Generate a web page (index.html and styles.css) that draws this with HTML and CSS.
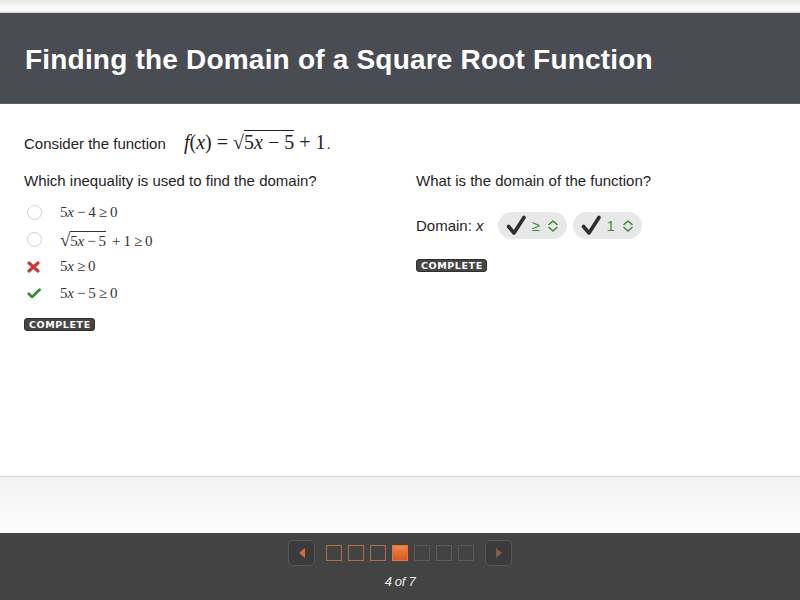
FILE: index.html
```html
<!DOCTYPE html>
<html>
<head>
<meta charset="utf-8">
<link rel="stylesheet" href="styles.css">
</head>
<body>
<div class="topstrip"></div>
<header class="header"><h1 class="title">Finding the Domain of a Square Root Function</h1></header>
<main class="content">
  <p class="intro">Consider the function <span class="math"><i>f</i>(<i>x</i>) = <span class="rad">√</span><span class="radicand">5<i>x</i> − 5</span> + 1</span>.</p>
  <div class="cols">
    <section class="col">
      <p class="q">Which inequality is used to find the domain?</p>
      <ul class="opts">
        <li class="opt"><span class="mark"><span class="radio"></span></span><span class="expr">5<i>x</i> − 4 ≥ 0</span></li>
        <li class="opt"><span class="mark"><span class="radio"></span></span><span class="expr"><span class="srad">√</span><span class="sradicand">5<i>x</i> − 5</span> + 1 ≥ 0</span></li>
        <li class="opt"><span class="mark"><svg width="13" height="12" viewBox="0 0 13 12"><path d="M2 2 L11 10 M11 2 L2 10" stroke="#c73a3c" stroke-width="3.2" stroke-linecap="round"/></svg></span><span class="expr">5<i>x</i> ≥ 0</span></li>
        <li class="opt"><span class="mark"><svg width="14" height="11" viewBox="0 0 14 11"><path d="M1.8 5.8 L5 9 L12.5 1.8" fill="none" stroke="#3c8c32" stroke-width="2.8" stroke-linecap="round" stroke-linejoin="round"/></svg></span><span class="expr">5<i>x</i> − 5 ≥ 0</span></li>
      </ul>
      <span class="badge badge-left">COMPLETE</span>
    </section>
    <section class="col">
      <p class="q">What is the domain of the function?</p>
      <div class="domain">
        <span class="dlabel">Domain: <i>x</i></span>
        <span class="pill">
          <svg class="chk" width="21" height="21" viewBox="0 0 21 21"><path d="M2.5 11.5 L8 18 L18 2.5" fill="none" stroke="#2e2e2e" stroke-width="3.6" stroke-linecap="round" stroke-linejoin="round"/></svg>
          <span class="val">≥</span>
          <svg class="chev" width="12" height="14" viewBox="0 0 12 14"><path d="M2 5.5 L6 2 L10 5.5 M2 8.5 L6 12 L10 8.5" fill="none" stroke="#3c8c32" stroke-width="1.6" stroke-linecap="round" stroke-linejoin="round"/></svg>
        </span>
        <span class="pill">
          <svg class="chk" width="21" height="21" viewBox="0 0 21 21"><path d="M2.5 11.5 L8 18 L18 2.5" fill="none" stroke="#2e2e2e" stroke-width="3.6" stroke-linecap="round" stroke-linejoin="round"/></svg>
          <span class="val">1</span>
          <svg class="chev" width="12" height="14" viewBox="0 0 12 14"><path d="M2 5.5 L6 2 L10 5.5 M2 8.5 L6 12 L10 8.5" fill="none" stroke="#3c8c32" stroke-width="1.6" stroke-linecap="round" stroke-linejoin="round"/></svg>
        </span>
      </div>
      <span class="badge badge-right">COMPLETE</span>
    </section>
  </div>
</main>
<div class="shelf"></div>
<footer class="footer">
  <nav class="nav">
    <span class="navbtn"><span class="tri tri-left"></span></span>
    <span class="steps">
      <span class="step done"></span><span class="step done"></span><span class="step done"></span><span class="step cur"></span><span class="step"></span><span class="step"></span><span class="step"></span>
    </span>
    <span class="navbtn"><span class="tri tri-right"></span></span>
  </nav>
  <div class="count">4 of 7</div>
</footer>
</body>
</html>
```
FILE: styles.css
```css
* { box-sizing: border-box; }
html, body { margin: 0; padding: 0; }
body {
  width: 800px;
  height: 600px;
  overflow: hidden;
  background: #fff;
  font-family: "Liberation Sans", Arial, sans-serif;
  color: #1e1e1e;
}
.topstrip {
  height: 13px;
  background: linear-gradient(#e8e8e8, #fbfbfb 60%, #f4f4f4);
  border-bottom: 1px solid #d4d4d4;
}
.header {
  height: 91px;
  background: #4a4c54;
  border-bottom: 1px solid #5c5e65;
  display: flex;
  align-items: center;
  padding: 4px 0 0 25px;
}
.title {
  margin: 0;
  font-size: 28px;
  line-height: 32px;
  font-weight: bold;
  color: #fff;
  letter-spacing: 0.2px;
}
.content {
  height: 373px;
  padding: 28px 24px 0 24px;
  border-bottom: 1px solid #d6d6d6;
}
.intro {
  margin: 0;
  font-size: 15px;
  line-height: 21px;
  height: 21px;
}
.math {
  font-family: "Liberation Serif", "Times New Roman", serif;
  font-size: 20px;
  margin-left: 14px;
  margin-right: 1px;
  color: #222;
}
.rad { font-size: 20px; }
.radicand { border-top: 1.3px solid #222; }
.cols {
  display: grid;
  grid-template-columns: 392px 1fr;
  margin-top: 18px;
}
.col { display: flex; flex-direction: column; align-items: flex-start; }
.q {
  margin: 0;
  font-size: 15px;
  line-height: 20px;
}
.opts {
  list-style: none;
  margin: 8px 0 0 0;
  padding: 0;
}
.opt {
  height: 27px;
  display: flex;
  align-items: center;
}
.mark {
  width: 36px;
  display: flex;
  justify-content: flex-start;
  padding-left: 3px;
}
.radio {
  width: 15px;
  height: 15px;
  border-radius: 50%;
  border: 1px solid #cfcfcf;
  background: #fff;
}
.expr {
  font-family: "Liberation Serif", "Times New Roman", serif;
  font-size: 15px;
  color: #333;
  letter-spacing: -0.2px;
  word-spacing: -0.4px;
}
.srad { font-size: 19px; margin-right: 0; }
.sradicand { border-top: 1px solid #333; padding-top: 1px; margin-right: 3px; }
.badge {
  display: inline-block;
  background: #464646;
  border: 1px solid #2f2f2f;
  border-radius: 3px;
  color: #fff;
  font-family: "DejaVu Sans", Verdana, sans-serif;
  font-weight: bold;
  font-size: 9.5px;
  line-height: 11px;
  letter-spacing: 0.6px;
  padding: 0 3px 0 4px;
}
.badge-left { margin-top: 11px; }
.badge-right { margin-top: 20px; }
.domain {
  margin-top: 21px;
  display: flex;
  align-items: center;
  gap: 6px;
}
.dlabel {
  font-size: 15px;
  line-height: 20px;
  margin-right: 8px;
}
.pill {
  height: 27px;
  width: 69px;
  border-radius: 14px;
  background: #e8e8e8;
  display: flex;
  align-items: center;
  padding-left: 8px;
}
.chk { margin-right: 5px; }
.val {
  font-size: 15px;
  color: #3c8c32;
  width: 12px;
}
.chev { margin-left: 3px; }
.shelf {
  height: 56px;
  background: linear-gradient(#f3f3f3, #fdfdfd);
}
.footer {
  height: 67px;
  background: #434343;
  padding-top: 7px;
  display: flex;
  flex-direction: column;
  align-items: center;
}
.nav {
  display: flex;
  align-items: center;
  height: 26px;
}
.navbtn {
  width: 27px;
  height: 26px;
  border: 1px solid #575757;
  border-radius: 5px;
  background: #3b3b3b;
  display: flex;
  align-items: center;
  justify-content: center;
}
.tri { width: 0; height: 0; border-top: 5px solid transparent; border-bottom: 5px solid transparent; }
.tri-left { border-right: 6px solid #d96a35; }
.tri-right { border-left: 6px solid #8a5a42; }
.steps {
  display: flex;
  gap: 6px;
  margin: 0 11px 0 11px;
}
.step {
  width: 16px;
  height: 16px;
  border: 1px solid #5a5a5a;
}
.step.done { border-color: #b06f4c; }
.step.cur { border-color: #e4763a; background: linear-gradient(#f08545, #d45a1e); }
.count {
  margin-top: 8px;
  font-size: 13px;
  line-height: 16px;
  font-style: italic;
  color: #ececec;
  letter-spacing: -0.3px;
}
```
